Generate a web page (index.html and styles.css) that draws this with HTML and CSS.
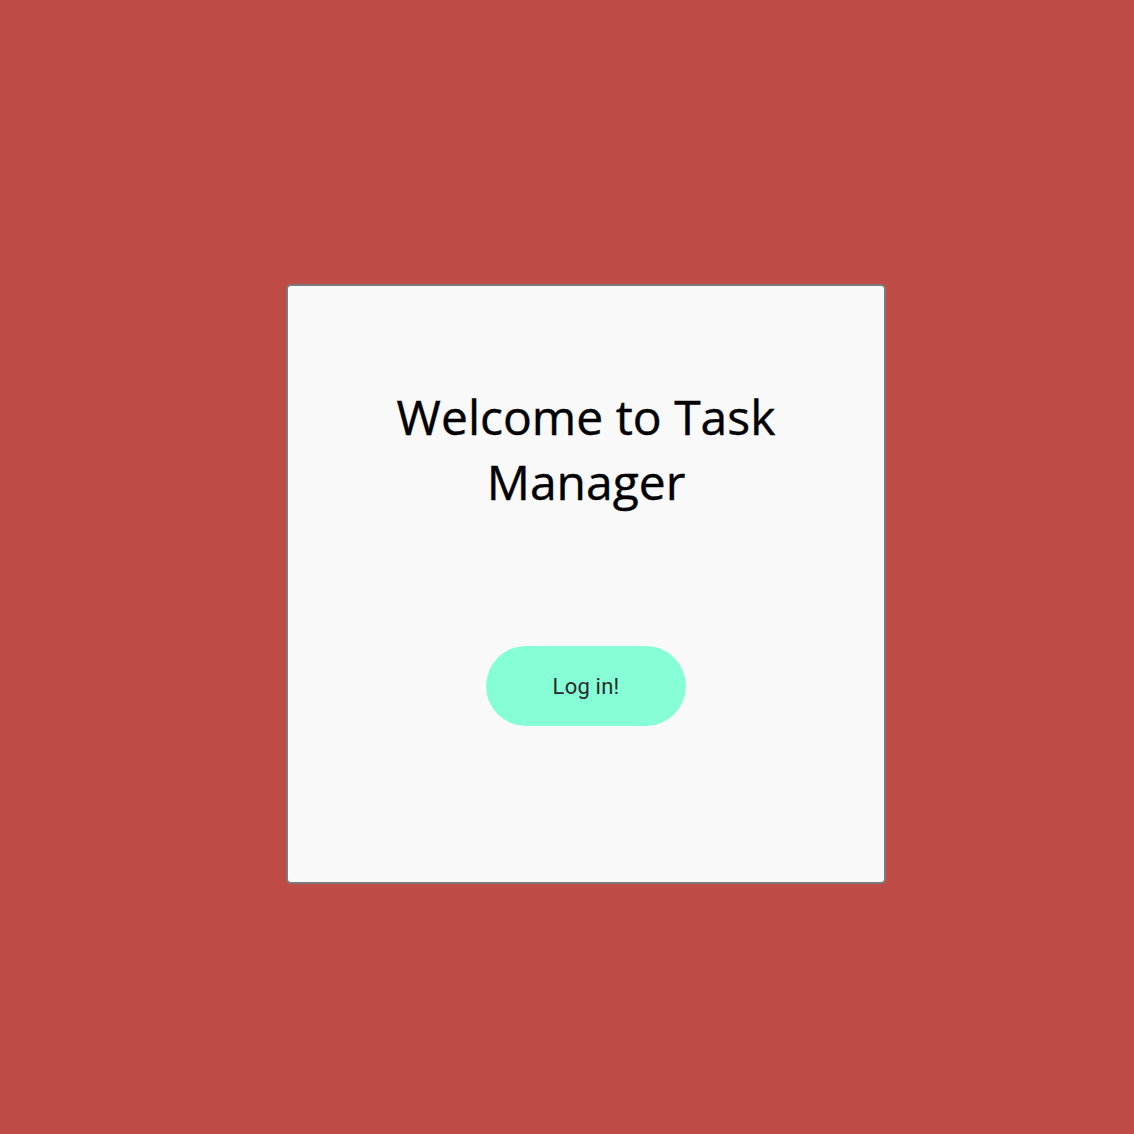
FILE: index.html
```html
<!DOCTYPE html>
<html>
<head>
<meta charset="utf-8">
<link rel="stylesheet" href="styles.css">
</head>
<body>
<main class="page">
  <section class="card">
    <h1 class="title">Welcome to Task Manager</h1>
    <button class="login">Log in!</button>
  </section>
</main>
</body>
</html>
```
FILE: styles.css
```css
html, body {
  margin: 0;
  padding: 0;
  background: #bf4b46;
  height: 100%;
}
.page {
  padding: 284px 0 0 286px;
}
.card {
  box-sizing: border-box;
  width: 600px;
  height: 600px;
  background: #f9f9f9;
  border: 2px solid #7b7b7b;
  border-radius: 5px;
  display: flex;
  flex-direction: column;
  align-items: center;
  padding: 98px 60px 0;
}
.title {
  margin: 0;
  font-family: "Open Sans", sans-serif;
  font-weight: 400;
  font-size: 48px;
  line-height: 65px;
  color: #000;
  text-align: center;
  -webkit-text-stroke: 0.4px #000;
}
.login {
  margin-top: 132px;
  width: 200px;
  height: 80px;
  border: none;
  border-radius: 40px;
  background: #86ffd6;
  color: #2a2a2a;
  font-family: Roboto, sans-serif;
  font-size: 22px;
  letter-spacing: 0.2px;
  padding: 0;
}
```
